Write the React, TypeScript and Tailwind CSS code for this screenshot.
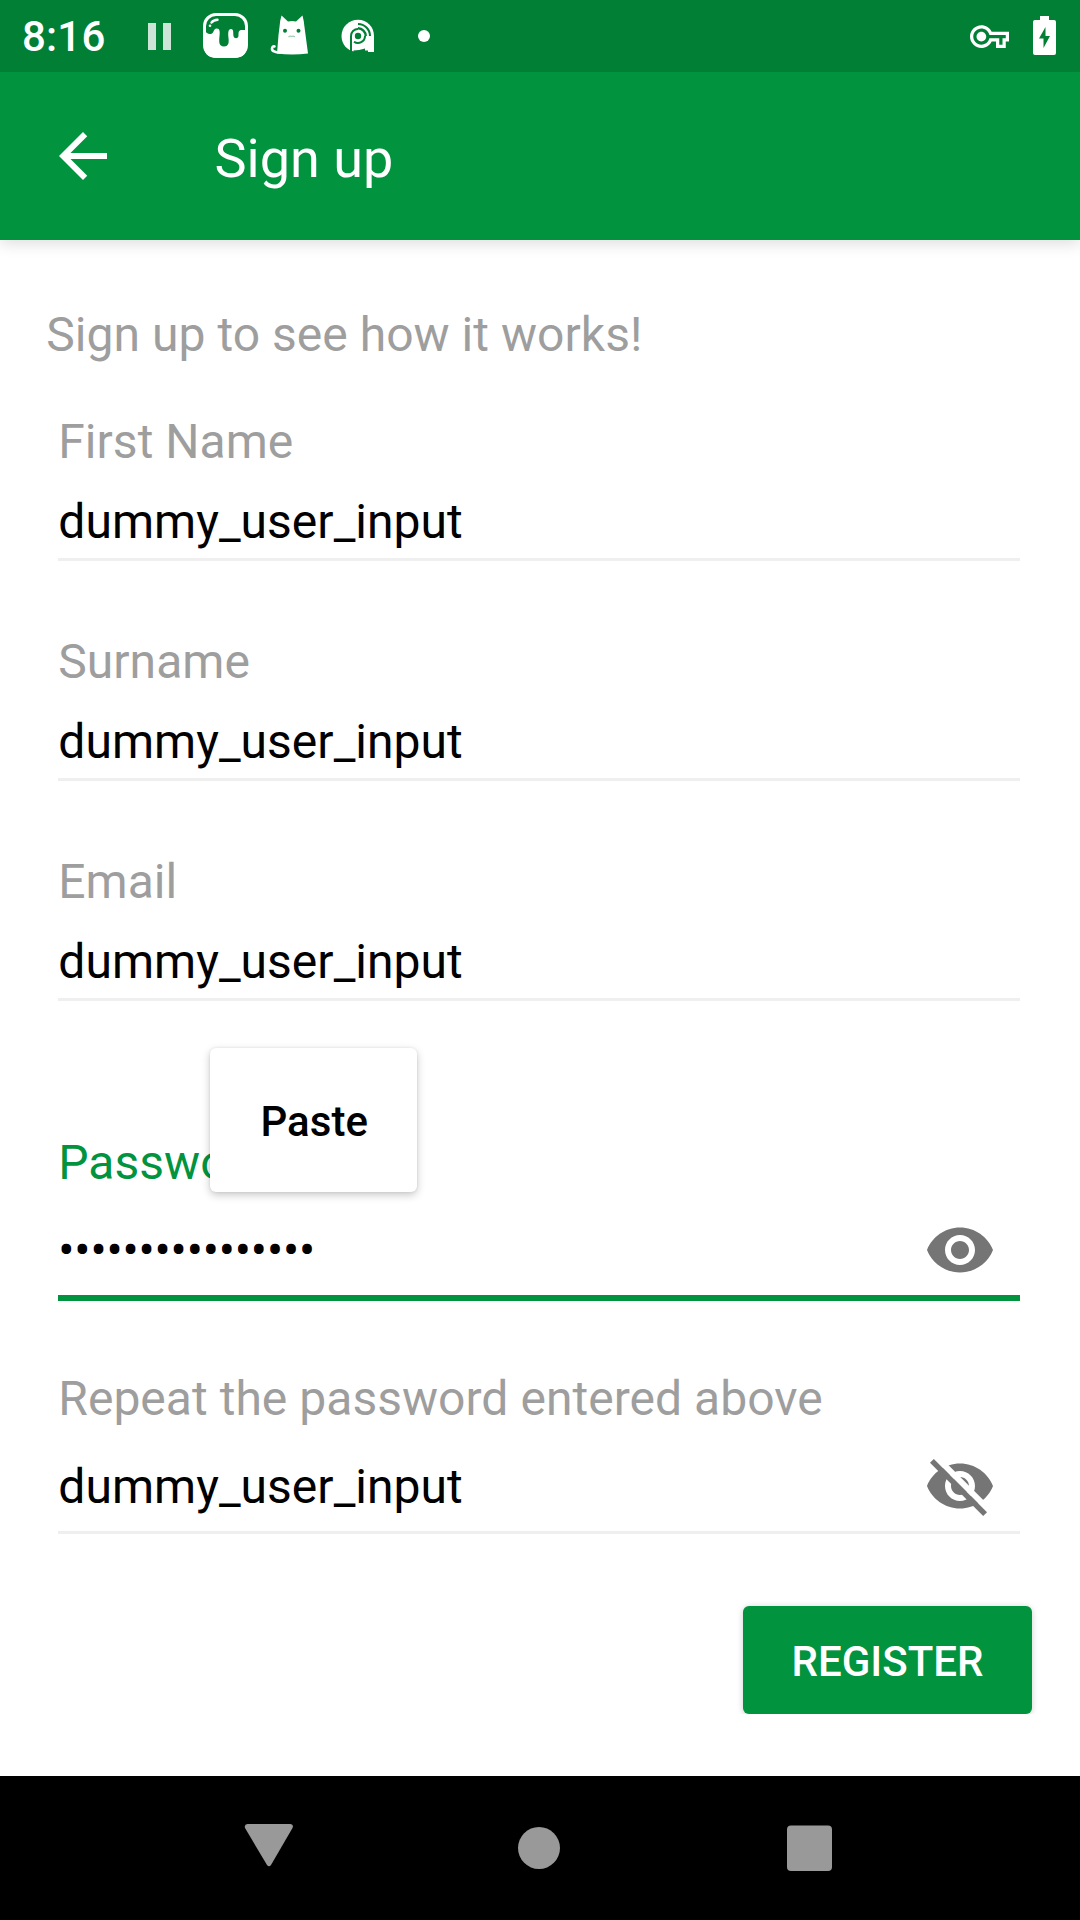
import React from "react";

function StatusBar() {
  return (
    <div className="relative z-10 flex h-[72px] items-center justify-between bg-[#007f35] text-white">
      <div className="flex h-full items-center">
        <span className="mt-[2px] ml-[22px] w-[126px] text-[42px] leading-[48px] font-medium tracking-[0.2px]">8:16</span>
        <svg className="mt-px" width="23" height="27" viewBox="0 0 23 27" fill="#cce5d7">
          <path d="M0 0h8v27H0zM15 0h8v27h-8z" />
        </svg>
        <svg className="mt-[-1px] ml-[32px]" width="45" height="45" viewBox="0 0 45 45">
          <rect x="1.500" y="1.500" width="42" height="42" rx="11.5" fill="none" stroke="#fff" strokeWidth="3" />
          <path
            fill="#fff"
            d="M1 17C3 20 6 22 9 20.500C11 19 10.500 16 13.500 15.500C17 15.300 17 19 16.500 23C16 28 15.500 33.500 21 33.500C26 33.500 26 29 25.500 25C25 20 25 16 28 16C31 16 30 20 30.500 23C31 26 35.500 26 35.500 22.500C35.500 19.500 35.500 17.500 38 17C40 16.800 42 18 44 15.500V33C44 40 40 44.500 33 44.500H12C5 44.500 1 40 1 33Z"
          />
          <path d="M8.500 9.500Q10.500 7 14.500 6.800" stroke="#fff" strokeWidth="2.4" strokeLinecap="round" fill="none" />
          <circle cx="7" cy="12.800" r="1.300" fill="#fff" />
        </svg>
        <svg className="mt-[-2px] ml-[22px]" width="39" height="40" viewBox="0 0 39 40">
          <path
            fill="#fff"
            d="M11.500 0.500L18 6.500Q22 5.500 26 6.500L32.500 0.500Q34 6 34.500 12L38 38.500Q22 40.500 7 38.500L8.500 20L9.500 12Q10 5 11.500 0.500Z"
          />
          <path d="M10 37.500C5 37.500 1.800 36 2 33.500C2.200 31.500 3.500 31 4.500 31.500" stroke="#fff" strokeWidth="2.600" fill="none" strokeLinecap="round" />
          <circle cx="15" cy="15.800" r="2" fill="#007f35" />
          <circle cx="28.500" cy="15.800" r="2" fill="#007f35" />
          <path d="M18.500 22q1.600-1.500 3.200-.5q1.600-1 3.200.5" stroke="#9fceb2" strokeWidth="1.2" fill="none" />
        </svg>
        <svg className="ml-[32px]" width="34" height="34" viewBox="0 0 34 34" fill="none" stroke="#007f35">
          <path fill="#fff" stroke="none" d="M17 0.800C26 0.800 33 8 33 17V33H15C6 32 0.500 25 0.500 17C0.500 8 8 0.800 17 0.800Z" />
          <path d="M10 33V17A7 7 0 0 1 17 10M24 17A7 7 0 0 1 13 22.700" strokeWidth="2" />
          <path d="M12.500 31.500Q18 31.500 24 29.500V31.500H27V34H12.500Z" fill="#007f35" stroke="none" />
          <circle cx="17" cy="17" r="3.200" fill="#007f35" stroke="none" />
          <path d="M17 9.300A7.700 7.700 0 0 1 24.700 17" strokeWidth="2.400" />
          <path d="M17 5A12 12 0 0 1 29 17" strokeWidth="2.100" />
        </svg>
        <span className="ml-[43px] size-3 rounded-full bg-white" />
      </div>
      <div className="flex h-full items-center">
        <svg className="mr-[3px]" width="39" height="39" viewBox="0 0 24 24" fill="#fff">
          <path d="M22 19h-6v-4h-2.680c-1.140 2.420-3.600 4-6.320 4-3.860 0-7-3.140-7-7s3.140-7 7-7c2.720 0 5.170 1.580 6.320 4H24v6h-2v4zm-4-2h2v-4h2v-2H11.940l-.23-.67C11.010 8.340 9.110 7 7 7c-2.760 0-5 2.240-5 5s2.240 5 5 5c2.110 0 4.010-1.340 4.710-3.330l.23-.67H18v4zM7 15c-1.650 0-3-1.350-3-3s1.350-3 3-3 3 1.350 3 3-1.350 3-3 3z" />
        </svg>
        <svg className="mt-[-1px] mr-[24px] ml-[21px]" width="23" height="39" viewBox="0 0 23 39">
          <path
            fill="#fff"
            fillRule="evenodd"
            d="M7 0H16V4H21Q23 4 23 6V37Q23 39 21 39H2Q0 39 0 37V6Q0 4 2 4H7ZM12.500 11L6 22.500H10.500V32L17 20H12.500Z"
          />
        </svg>
      </div>
    </div>
  );
}

function AppBar() {
  return (
    <header className="relative flex h-[168px] items-center bg-[#02933f] text-white shadow-[0_4px_14px_rgba(0,0,0,0.13)]">
      <svg className="ml-[46.5px]" width="72" height="72" viewBox="0 0 24 24" fill="#fff">
        <path d="M20 11H7.830l5.590-5.590L12 4l-8 8 8 8 1.410-1.410L7.830 13H20v-2z" />
      </svg>
      <h1 className="mt-[5px] ml-[96px] text-[54px] leading-[64px] font-normal">Sign up</h1>
    </header>
  );
}

function Eye() {
  return (
    <svg width="72" height="72" viewBox="0 0 24 24" fill="#757575">
      <path d="M12 4.500C7 4.500 2.730 7.610 1 12c1.730 4.390 6 7.500 11 7.500s9.270-3.110 11-7.500c-1.730-4.390-6-7.500-11-7.500zM12 17c-2.760 0-5-2.240-5-5s2.240-5 5-5 5 2.240 5 5-2.240 5-5 5zm0-8c-1.660 0-3 1.340-3 3s1.340 3 3 3 3-1.340 3-3-1.340-3-3-3z" />
    </svg>
  );
}

function EyeOff() {
  return (
    <svg width="72" height="72" viewBox="0 0 24 24">
      <defs>
        <mask id="cut">
          <rect width="24" height="24" fill="#fff" />
          <path d="M0 -0.270L24 23.730V20.900L3.100 0Z" fill="#000" />
        </mask>
      </defs>
      <g fill="#757575">
        <path
          mask="url(#cut)"
          d="M12 4.500C7 4.500 2.730 7.610 1 12c1.730 4.390 6 7.500 11 7.500s9.270-3.110 11-7.500c-1.730-4.390-6-7.500-11-7.500zM12 17c-2.760 0-5-2.240-5-5s2.240-5 5-5 5 2.240 5 5-2.240 5-5 5zm0-8c-1.660 0-3 1.340-3 3s1.340 3 3 3 3-1.340 3-3-1.340-3-3-3z"
        />
        <path d="M2 4.270L3.270 3L21 20.730L19.730 22Z" />
      </g>
    </svg>
  );
}

function Field({ label, value }: { label: string; value: string }) {
  return (
    <div className="mb-[73px] flex flex-col gap-6 border-b-[3px] border-[#efefef] pb-2">
      <label className="text-[#9e9e9e]">{label}</label>
      <div className="text-black">{value}</div>
    </div>
  );
}

function PastePopup() {
  return (
    <div className="absolute -top-[87px] left-[152px] flex h-[144px] w-[207px] items-center justify-center rounded-[6px] bg-white pt-[4px] pl-px text-[42px] leading-[50px] font-medium tracking-[0.1px] text-black shadow-[0_3px_8px_rgba(0,0,0,0.22),0_0_3px_rgba(0,0,0,0.08)]">
      Paste
    </div>
  );
}

export default function App() {
  return (
    <div className="flex h-[1920px] w-[1080px] flex-col overflow-hidden bg-white font-['Roboto',sans-serif]">
      <StatusBar />
      <AppBar />
      <main className="flex flex-1 flex-col pt-[67px] text-[48px] leading-[56px] tracking-[0.03px]">
        <p className="mb-[51px] ml-[46.3px] text-[#9e9e9e]">Sign up to see how it works!</p>
        <form className="mr-[60px] ml-[58.3px]">
          <Field label="First Name" value="dummy_user_input" />
          <Field label="Surname" value="dummy_user_input" />
          <Field label="Email" value="dummy_user_input" />
          <div className="relative mt-[134px] mb-[70px] flex flex-col gap-[23px] border-b-[6px] border-[#02933f] pb-[9px]">
            <label className="text-[#02933f]">Password</label>
            <div className="flex items-center justify-between pr-6">
              <span className="pt-[2px] tracking-[-0.15px] text-black">••••••••••••••••</span>
              <Eye />
            </div>
            <PastePopup />
          </div>
          <div className="flex flex-col gap-[23px] border-b-[3px] border-[#efefef] pb-[9px]">
            <label className="text-[#9e9e9e]">Repeat the password entered above</label>
            <div className="flex items-center justify-between pr-6">
              <span className="pt-[2px] text-black">dummy_user_input</span>
              <EyeOff />
            </div>
          </div>
        </form>
        <button className="mt-[72px] mr-12 h-[108px] w-[289px] self-end rounded-[6px] bg-[#02933f] pt-[3px] text-[42px] leading-[50px] font-medium text-white shadow-[0_1px_6px_rgba(0,0,0,0.2)] [clip-path:inset(-10px_-10px_0_-10px)]">
          REGISTER
        </button>
      </main>
      <nav className="h-[144px] bg-black">
        <svg width="1080" height="144" viewBox="0 0 1080 144" fill="#999">
          <path d="M247.500 48H290.500Q294 48.500 292.500 52L271 89Q269 91.500 267 89L245 52Q244 48.500 247.500 48Z" />
          <circle cx="539" cy="72" r="21" />
          <rect x="787" y="49.500" width="45" height="45.500" rx="4" />
        </svg>
      </nav>
    </div>
  );
}
